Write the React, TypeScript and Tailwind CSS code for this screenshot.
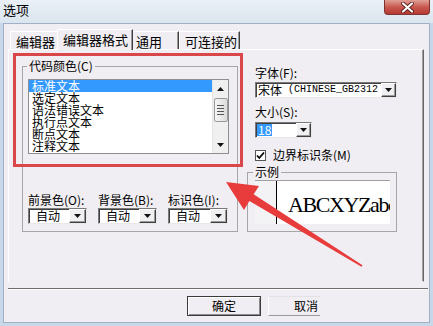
import React from "react";

const cjk = "font-['Noto_Sans_CJK_SC','Noto_Sans',sans-serif]";

function Caret({ up }: { up?: boolean }) {
  return (
    <svg width="7" height="4" viewBox="0 0 7 4">
      <path d={up ? "M0 4h7L3.5 0z" : "M0 0h7L3.5 4z"} fill="#111" />
    </svg>
  );
}

function DropButton({ w = 17 }: { w?: number }) {
  return (
    <div
      className={`h-full shrink-0 flex items-center justify-center bg-[#f0eff2] border border-t-white border-l-white border-r-[#404040] border-b-[#404040] shadow-[inset_-1px_-1px_0_#9a9a9a] ${
        w === 15 ? "w-[15px]" : "w-[17px]"
      }`}
    >
      <Caret />
    </div>
  );
}

function Combo({
  className,
  children,
  btn,
}: {
  className: string;
  children: React.ReactNode;
  btn?: number;
}) {
  return (
    <div
      className={`flex items-stretch bg-white border border-t-[#7a7a7a] border-l-[#7a7a7a] border-r-[#e8e8e8] border-b-[#e8e8e8] shadow-[inset_1px_1px_0_#404040] ${className}`}
    >
      <div className="flex-1 min-w-0 flex items-center whitespace-nowrap text-[12px] leading-[14px]">
        {children}
      </div>
      <DropButton w={btn} />
    </div>
  );
}

const items = ["标准文本", "选定文本", "语法错误文本", "执行点文本", "断点文本", "注释文本"];

export default function App() {
  return (
    <div className={`relative w-[433px] h-[326px] overflow-hidden bg-[#c9d8e8] flex flex-col text-black ${cjk}`}>
      {/* Title bar */}
      <div className="h-[23px] shrink-0 flex items-start justify-between bg-linear-to-b from-[#eaf0f6] to-[#dbe5ef]">
        <span className="pl-[3px] pt-[2px] text-[13px] leading-[16px]">选项</span>
        <div className="mr-[3px] w-[46px] h-[15px] rounded-b-[4px] border border-t-0 border-[#7e3430] bg-linear-to-b from-[#e0a096] via-[#c8584f] to-[#b63a31] flex items-center justify-center">
          <svg width="13" height="11" viewBox="0 0 13 11">
            <path d="M2 1.5l9 8M11 1.5l-9 8" stroke="#5a1d1a" strokeWidth="3.8" strokeLinecap="round" />
            <path d="M2 1.5l9 8M11 1.5l-9 8" stroke="#fff" strokeWidth="2.2" strokeLinecap="round" />
          </svg>
        </div>
      </div>

      {/* Client area */}
      <div className="mx-[3px] mb-[3px] flex-1 flex flex-col bg-[#f0eef2] border border-[#9fb1c5]">
        {/* Tabs */}
        <div className="pt-[5px] pl-[6px] h-[25px] flex items-end">
          <div className="w-[47px] h-[18px] pl-[5px] pt-[2px] text-[13px] leading-[16px] border-t border-l border-t-white border-l-white">
            编辑器
          </div>
          <div className="relative z-10 -mb-[1px] w-[76px] h-[21px] pl-[5px] pt-[2px] text-[13px] leading-[16px] bg-[#f0eef2] border-t border-l border-r border-t-white border-l-white border-r-[#404040] shadow-[inset_-1px_0_0_#9a9a9a]">
            编辑器格式
          </div>
          <div className="w-[46px] h-[18px] pl-[3px] pt-[2px] text-[13px] leading-[16px] border-t border-r border-t-white border-r-[#404040] shadow-[inset_-1px_0_0_#9a9a9a]">
            通用
          </div>
          <div className="w-[61px] h-[18px] pl-[5px] pt-[2px] text-[13px] leading-[16px] border-t border-l border-r border-t-white border-l-white border-r-[#404040] shadow-[inset_-1px_0_0_#9a9a9a]">
            可连接的
          </div>
        </div>

        {/* Tab panel */}
        <div className="ml-[4px] w-[416px] h-[233px] shrink-0 flex items-start pl-[13px] pt-[9px] border border-t-white border-l-white border-b-transparent border-r-[#666] shadow-[inset_-1px_0_0_#a0a0a0]">
          {/* Code colour group */}
          <fieldset className="w-[216px] h-[173px] border border-[#a6a6a6] pl-[4px] pr-[6px] flex flex-col">
            <legend className="px-[2px] text-[12px] leading-[14px]">代码颜色(C)</legend>
            <div className="ml-[1px] mt-[6px] w-[201px] h-[75px] flex border border-[#8e8e8e] bg-white">
              <div className="flex-1 flex flex-col text-[12px] leading-[12px]">
                {items.map((t, i) => (
                  <div
                    key={t}
                    className={`h-[12px] pl-[3px] whitespace-nowrap ${i === 0 ? "bg-[#3399ff] text-white" : ""}`}
                  >
                    {t}
                  </div>
                ))}
              </div>
              <div className="w-[16px] flex flex-col items-center bg-[#f0f0f0] border-l border-[#e4e4e4]">
                <div className="h-[17px] flex items-center justify-center">
                  <Caret up />
                </div>
                <div className="mt-[1px] w-[14px] h-[24px] rounded-[2px] border border-[#9a9a9a] bg-linear-to-r from-[#f6f6f6] to-[#dcdcdc] flex flex-col items-center justify-center gap-[2px]">
                  <div className="w-[7px] h-px bg-[#555]" />
                  <div className="w-[7px] h-px bg-[#555]" />
                  <div className="w-[7px] h-px bg-[#555]" />
                  <div className="w-[7px] h-px bg-[#555]" />
                </div>
                <div className="flex-1" />
                <div className="h-[17px] flex items-center justify-center">
                  <Caret />
                </div>
              </div>
            </div>

            <div className="ml-[1px] mt-[39px] grid grid-cols-[59px_59px_60px] gap-x-[11px]">
              {["前景色(O):", "背景色(B):", "标识色(I):"].map((l) => (
                <div key={l} className="flex flex-col">
                  <span className="text-[12px] leading-[14px] whitespace-nowrap">{l}</span>
                  <Combo className="mt-[1px] h-[16px]">
                    <span className="pl-[7px] leading-[12px]">自动</span>
                  </Combo>
                </div>
              ))}
            </div>
          </fieldset>

          {/* Right column */}
          <div className="ml-[9px] w-[150px] flex flex-col">
            <span className="ml-[8px] mt-[7px] text-[12px] leading-[14px]">字体(F):</span>
            <Combo className="ml-[8px] mt-[2px] w-[142px] h-[16px]" btn={15}>
              <span className="pl-[2px] leading-[12px]">宋体</span>
              <span className="font-['Liberation_Mono',monospace] text-[10px] leading-[12px]">&nbsp;(CHINESE_GB2312</span>
            </Combo>
            <span className="ml-[8px] mt-[7px] text-[12px] leading-[14px]">大小(S):</span>
            <Combo className="ml-[8px] mt-[3px] w-[57px] h-[16px]" btn={15}>
              <span className="ml-[1px] px-[1px] bg-[#3399ff] text-white leading-[12px]">18</span>
            </Combo>
            <div className="ml-[8px] mt-[10px] flex items-center h-[14px]">
              <div className="w-[11px] h-[11px] border border-[#555] bg-white flex items-center justify-center">
                <svg width="9" height="9" viewBox="0 0 9 9">
                  <path d="M1 4.5l2.3 2.5L8 1.5" stroke="#000" strokeWidth="1.8" fill="none" />
                </svg>
              </div>
              <span className="ml-[7px] text-[12px] leading-[14px]">边界标识条(M)</span>
            </div>
            <fieldset className="mt-[3px] w-[150px] h-[67px] border border-[#a6a6a6] pl-[5px] flex flex-col">
              <legend className="px-[2px] text-[12px] leading-[14px]">示例</legend>
              <div className="ml-[2px] mt-[1px] w-[135px] h-[44px] flex border-t border-[#a0a0a0]">
                <div className="w-[21px] bg-[#f3f2f5]" />
                <div className="w-px bg-black" />
                <div className="flex-1 bg-white overflow-hidden pl-[11px] pt-[12px]">
                  <span className="block whitespace-nowrap font-['Liberation_Serif',serif] text-[22px] leading-[24px] tracking-[-1.4px]">
                    ABCXYZabc
                  </span>
                </div>
              </div>
            </fieldset>
          </div>
        </div>

        {/* Separator */}
        <div className="ml-[4px] mr-[1px] mt-[6px] h-[2px] border-t border-[#6d6d6d] border-b border-b-white" />

        {/* Buttons */}
        <div className="mt-[6px] pl-[183px] flex gap-[7px]">
          <div className="w-[74px] h-[20px] flex items-center justify-center text-[12px] border border-[#3c3c3c] shadow-[inset_1px_1px_0_#fff,inset_-1px_-1px_0_#8a8a8a]">
            确定
          </div>
          <div className="w-[52px] h-[20px] flex items-center pl-[25px] text-[12px] border-t border-l border-b border-t-[#e2e2e2] border-l-white border-b-[#9a9a9a]">
            取消
          </div>
        </div>
      </div>

      {/* Annotation: red box */}
      <div className="absolute left-[13px] top-[53px] w-[230px] h-[114px] border-[3px] border-[#d9474b] pointer-events-none" />

      {/* Annotation: red arrow */}
      <svg className="absolute inset-0 pointer-events-none" width="433" height="326" viewBox="0 0 433 326">
        <polygon
          points="226,182 259,186 253.6,194.3 362.5,265.2 361.5,266.8 249.4,201.1 244,210"
          fill="#e83b3c"
        />
      </svg>
    </div>
  );
}
